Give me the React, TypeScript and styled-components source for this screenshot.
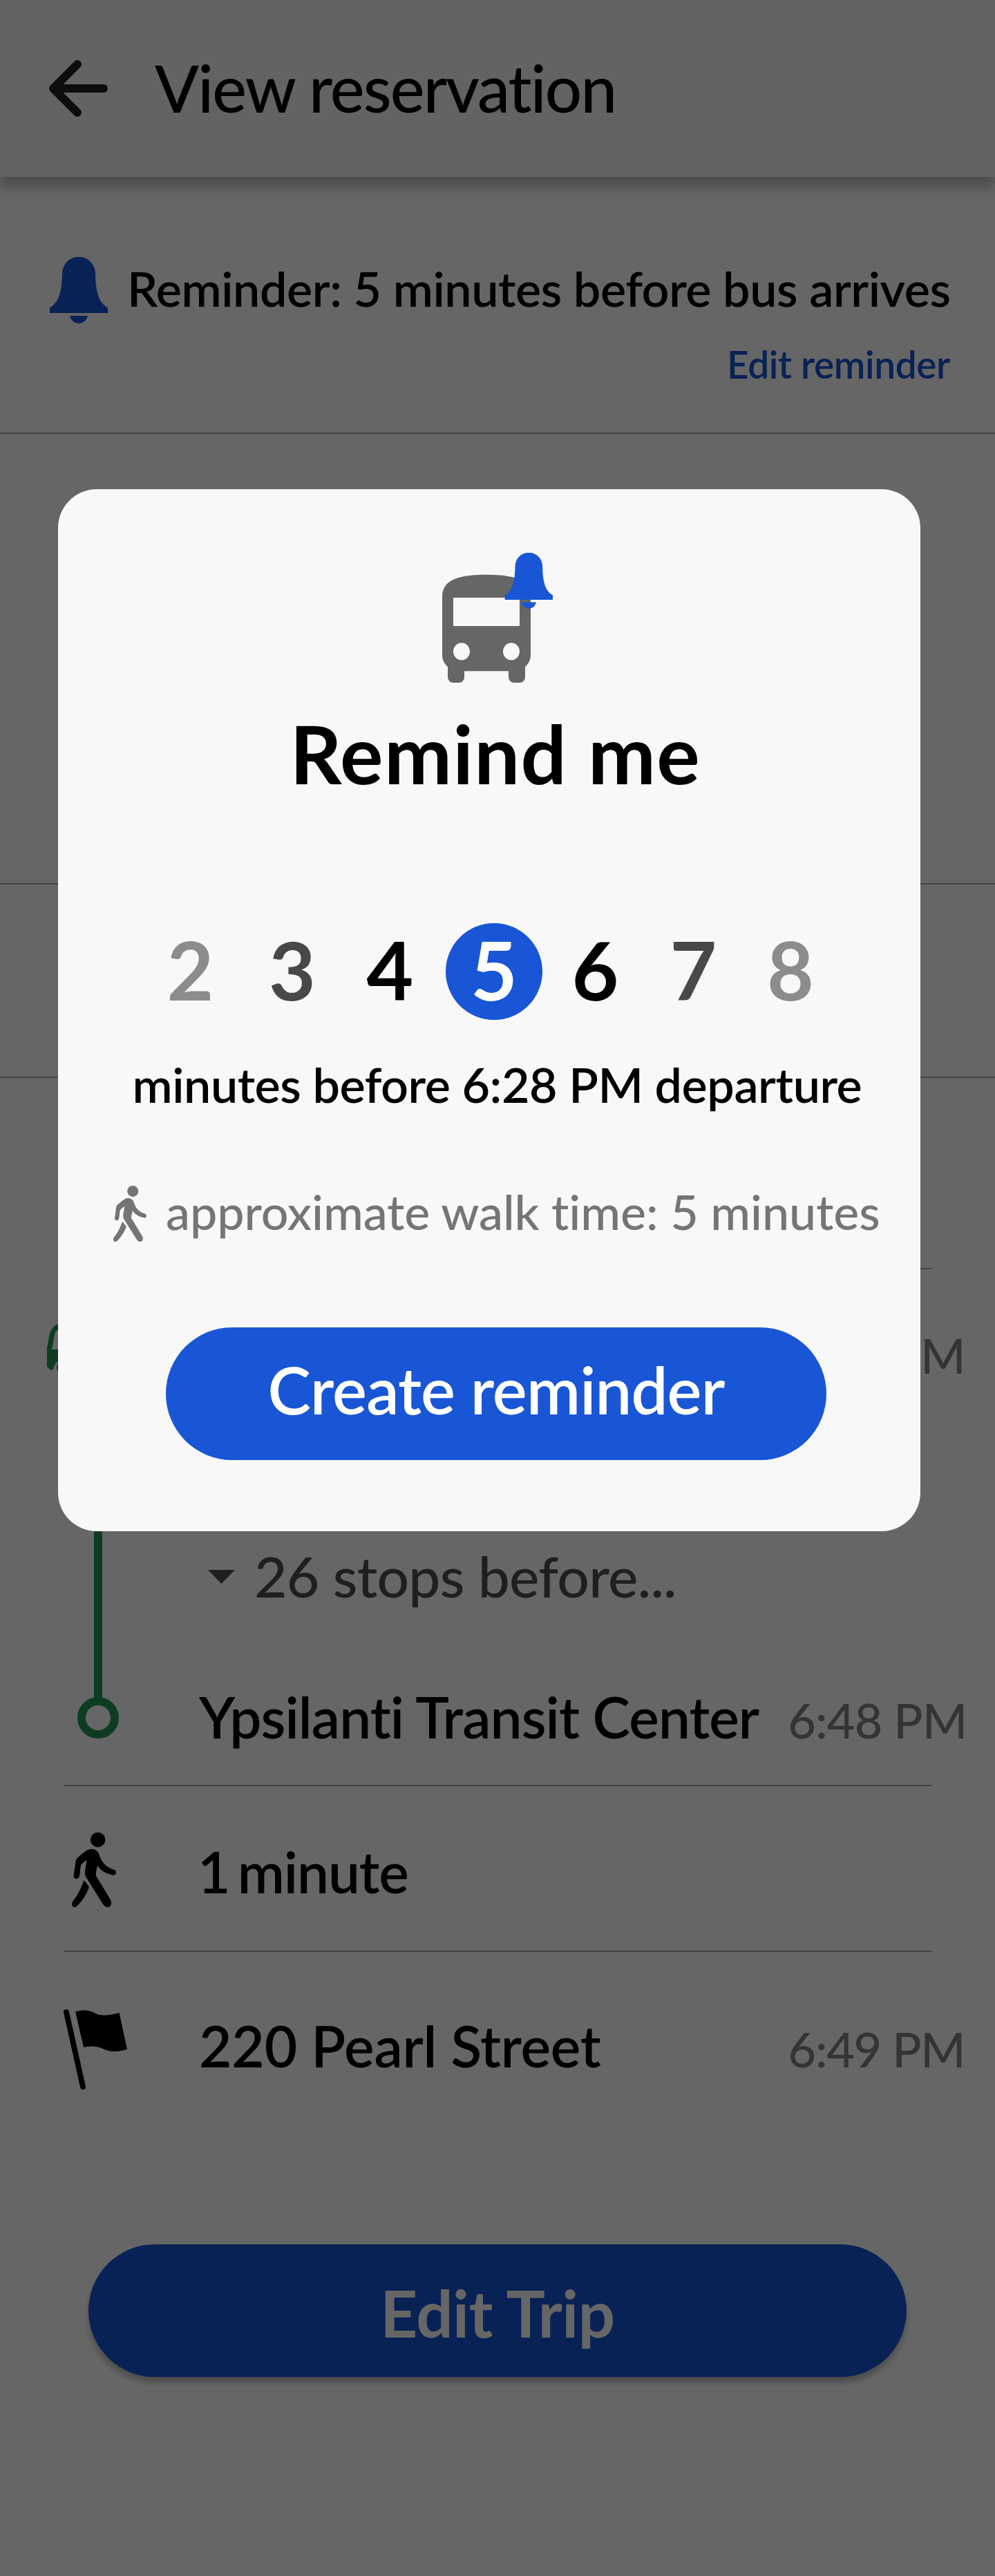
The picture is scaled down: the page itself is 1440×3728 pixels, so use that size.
import React from "react";
import styled, { createGlobalStyle } from "styled-components";

const BLUE = "#1856d6";
const GREEN = "#219653";
const GRAY_DARK = "#4f4f4f";
const GRAY = "#828282";

const GlobalStyle = createGlobalStyle`
  *, *::before, *::after { box-sizing: border-box; }
  body { margin: 0; background: #ffffff; }
  svg { display: block; flex: none; }
`;

const Screen = styled.main`
  position: relative;
  width: 1440px;
  height: 3728px;
  overflow: hidden;
  background: #ffffff;
  color: #000000;
  font-family: Lato, "Open Sans", sans-serif;
`;

interface TextProps {
  $size: number;
  $weight?: number;
  $track?: number;
  $word?: number;
  $color?: string;
}

const Text = styled.span<TextProps>`
  display: block;
  flex: none;
  white-space: nowrap;
  line-height: 1.2;
  font-size: ${(p) => p.$size}px;
  font-weight: ${(p) => p.$weight ?? 600};
  letter-spacing: ${(p) => p.$track ?? 0}px;
  word-spacing: ${(p) => p.$word ?? 0}px;
  color: ${(p) => p.$color ?? "inherit"};
`;

const AppBar = styled.header`
  position: relative;
  display: flex;
  align-items: flex-start;
  gap: 68px;
  height: 256px;
  padding: 71px 0 0 71px;
  background: #f8f8f8;
  box-shadow: 0 16px 16px rgba(0, 0, 0, 0.25);

  svg { margin-top: 16px; }
`;

const ReminderSection = styled.section`
  height: 372px;
  padding: 116px 65px 0 72px;
  border-bottom: 2px solid #aaaaaa;
`;

const ReminderLine = styled.div`
  display: flex;
  align-items: flex-start;
  gap: 28px;
  height: 96px;
`;

const ReminderText = styled.div`
  padding-top: 3px;
`;

const EditLink = styled.div`
  display: flex;
  justify-content: flex-end;
  padding-top: 26px;
`;

const Band = styled.section<{ $height: number }>`
  height: ${(p) => p.$height}px;
  border-bottom: 2px solid #aaaaaa;
`;

const Divider = styled.hr`
  height: 2px;
  margin: 0 92px;
  border: 0;
  background: #aaaaaa;
`;

const Spacer = styled.div<{ $height: number }>`
  height: ${(p) => p.$height}px;
`;

const Leg = styled.section`
  position: relative;
  height: 746px;
`;

const LegRow = styled.div<{ $top: number }>`
  display: flex;
  align-items: baseline;
  padding: ${(p) => p.$top}px 0 0 288px;
`;

const Departure = styled.div`
  display: flex;
  justify-content: space-between;
  align-items: flex-start;
  height: 165px;
  padding: 79px 44px 0 68px;
`;

const DepartureTime = styled.div`
  padding-top: 3px;
`;

const Track = styled.div`
  position: absolute;
  left: 136px;
  top: 146px;
  width: 12px;
  height: 478px;
  background: ${GREEN};
`;

const StopDot = styled.div`
  position: absolute;
  left: 112px;
  top: 619px;
  width: 60px;
  height: 60px;
  border: 12px solid ${GREEN};
  border-radius: 50%;
  background: #ffffff;
`;

const StopsToggle = styled.div`
  display: flex;
  align-items: flex-start;
  gap: 28px;
  height: 99px;
  margin-top: 229px;
  padding-left: 301px;

  svg { margin-top: 41px; }
`;

const Time = styled.div<{ $left: number }>`
  margin-left: ${(p) => p.$left}px;
`;

const Step = styled.section<{ $height: number; $icon: number }>`
  display: grid;
  grid-template-columns: ${(p) => p.$icon}px auto;
  align-items: start;
  height: ${(p) => p.$height}px;
`;

const StepIcon = styled.div<{ $top: number; $left: number }>`
  padding: ${(p) => p.$top}px 0 0 ${(p) => p.$left}px;
`;

const StepBody = styled.div<{ $top: number }>`
  display: flex;
  align-items: baseline;
  padding-top: ${(p) => p.$top}px;
`;

const PillButton = styled.button<{ $width: number }>`
  display: flex;
  align-items: center;
  justify-content: center;
  width: ${(p) => p.$width}px;
  height: 192px;
  padding: 0;
  border: 0;
  border-radius: 96px;
  background: ${BLUE};
  color: #ffffff;
  font-family: inherit;
`;

const EditTrip = styled(PillButton)`
  margin: 0 0 0 128px;
  padding-top: 7px;
  box-shadow: 0 8px 8px rgba(0, 0, 0, 0.25);
`;

const Scrim = styled.div`
  position: absolute;
  inset: 0;
  padding: 708px 0 0 84px;
  background: rgba(0, 0, 0, 0.6);
`;

const Dialog = styled.div`
  display: flex;
  flex-direction: column;
  align-items: flex-start;
  width: 1248px;
  height: 1508px;
  padding-top: 92px;
  border-radius: 56px;
  background: #f8f8f8;
`;

const DialogPart = styled.div<{ $top: number; $left: number }>`
  padding: ${(p) => p.$top}px 0 0 ${(p) => p.$left}px;
`;

const Minutes = styled.div`
  display: grid;
  grid-template-columns: 147px 148px 135px 166px 127px 157px 124px;
  justify-items: center;
  margin: 176px 0 0 118px;
`;

const Minute = styled.div<{ $color: string; $active: boolean }>`
  display: flex;
  align-items: center;
  justify-content: center;
  width: ${(p) => (p.$active ? "140px" : "auto")};
  height: 140px;
  padding-bottom: 7px;
  border-radius: 50%;
  background: ${(p) => (p.$active ? BLUE : "transparent")};
  color: ${(p) => p.$color};
`;

const WalkTime = styled.div`
  display: flex;
  align-items: flex-start;
  gap: 28px;
  margin: 100px 0 0 80px;
  color: #757575;

  svg { margin-top: 5px; }
`;

const CreateButton = styled(PillButton)`
  margin: 124px 0 0 156px;
  padding-bottom: 11px;
`;

const ArrowIcon = () => (
  <svg width="85" height="82" viewBox="0 0 85 82" fill="none" stroke="#222222" strokeWidth="12" strokeLinecap="round" strokeLinejoin="round">
    <path d="M41 6 6 41l35 35" />
    <path d="M8 41h71" />
  </svg>
);

const BELL = "M54 71A71 71 0 0 1 198 71C199 150 213 199 252 219V243H0V219C39 199 53 150 54 71ZM87 255H165C160 275 145 288 126 288S92 275 87 255Z";

const BellIcon = () => (
  <svg width="84" height="96" viewBox="0 0 252 288" fill={BLUE}>
    <path d={BELL} />
  </svg>
);

const BusBellIcon = () => (
  <svg width="160" height="188" viewBox="0 0 480 564">
    <g transform="translate(0 95)">
      <path
        fill="#666666"
        fillRule="evenodd"
        d="M0 96C0 20 75 0 192 0S384 20 384 96V350C384 370 375 387 360 400V445A24 24 0 0 1 336 469H312A24 24 0 0 1 288 445V419H96V445A24 24 0 0 1 72 469H48A24 24 0 0 1 24 445V400C9 387 0 370 0 350ZM48 100V223H336V100ZM48 333.500A36 37.500 0 1 0 120 333.500A36 37.500 0 1 0 48 333.500ZM264 333.500A36 37.500 0 1 0 336 333.500A36 37.500 0 1 0 264 333.500Z"
      />
    </g>
    <path transform="translate(272 0) scale(.825 .84)" fill={BLUE} d={BELL} />
  </svg>
);

const WalkIcon = ({ width, height }: { width: number; height: number }) => (
  <svg width={width} height={height} viewBox="0 0 192 324" fill="currentColor">
    <circle cx="113" cy="31.500" r="32" />
    <path d="M86 72C104 72 116 84 120 100C130 132 150 152 184 162C191 165 193 171 191 178C190 184 185 187 178 185C150 180 126 167 112 145C107 158 105 172 104 187L168 292C173 302 172 313 167 319C162 326 151 326 145 321C141 318 138 315 135 311L63 196C57 186 56 180 57 166L65 120C56 125 47 132 39 142C36 157 36 172 33 188C31 197 26 201 19 201C11 201 7 195 8 187L16 129C17 120 20 115 26 109C40 96 52 86 63 79C70 74 78 72 86 72Z" />
    <path d="M53 207L73 233C75 237 74 240 72 245C61 273 45 296 24 318C18 325 9 326 4 321C-1 316 -1 308 3 300C26 272 38 245 53 207Z" />
  </svg>
);

const FlagIcon = () => (
  <svg width="92" height="116" viewBox="0 0 276 348">
    <path d="M12 12 84 336" stroke="#000000" strokeWidth="24" strokeLinecap="round" />
    <path d="M51 10C78 2 108 0 130 13C154 31 192 27 242 15L276 173C240 185 200 187 170 170C142 157 116 159 87 164Z" />
  </svg>
);

const VehicleIcon = () => (
  <svg width="148" height="72" viewBox="0 0 148 72">
    <path
      fill={GREEN}
      fillRule="evenodd"
      d="M0 35C2 28 2 20 4 14C7 6 11 1 17 0H131C137 1 141 6 144 14L148 35V62L140 67H138C136 57 131 52 124 52S112 57 110 67H38C36 57 31 52 25 52C16 52 11 57 9 66C5 68 3 64 0 62ZM7 37H141L137 15C135 10 133 8 129 7H19C15 8 12 11 11 15Z"
    />
    <circle cx="25" cy="63" r="11" fill={GREEN} />
    <circle cx="124" cy="61" r="10" fill={GREEN} />
  </svg>
);

const CaretIcon = () => (
  <svg width="39" height="20" viewBox="0 0 39 20" fill={GRAY_DARK}>
    <path d="M0 0h39L19.500 20z" />
  </svg>
);

const minuteOptions = [
  { value: 2, color: "#8c8c8c" },
  { value: 3, color: "#484848" },
  { value: 4, color: "#000000" },
  { value: 5, color: "#ffffff", active: true },
  { value: 6, color: "#000000" },
  { value: 7, color: "#484848" },
  { value: 8, color: "#8c8c8c" },
];

function ReminderDialog() {
  return (
    <Dialog role="dialog" aria-label="Remind me">
      <DialogPart $top={0} $left={556}>
        <BusBellIcon />
      </DialogPart>
      <DialogPart $top={32} $left={335.5}>
        <Text $size={117} $weight={700} $track={1.3}>Remind me</Text>
      </DialogPart>
      <Minutes>
        {minuteOptions.map((m) => (
          <Minute key={m.value} $color={m.color} $active={!!m.active}>
            <Text $size={117} $weight={700}>{m.value}</Text>
          </Minute>
        ))}
      </Minutes>
      <DialogPart $top={51} $left={107.5}>
        <Text $size={70} $track={-0.45}>minutes before 6:28 PM departure</Text>
      </DialogPart>
      <WalkTime>
        <WalkIcon width={48} height={81} />
        <Text $size={70} $weight={500} $track={-0.09}>approximate walk time: 5 minutes</Text>
      </WalkTime>
      <CreateButton $width={956}>
        <Text $size={94} $track={-0.85}>Create reminder</Text>
      </CreateButton>
    </Dialog>
  );
}

export default function App() {
  return (
    <Screen>
      <GlobalStyle />
      <AppBar>
        <ArrowIcon />
        <Text $size={94} $weight={500} $track={-1.85}>View reservation</Text>
      </AppBar>

      <ReminderSection>
        <ReminderLine>
          <BellIcon />
          <ReminderText>
            <Text $size={70} $track={-0.42}>Reminder: 5 minutes before bus arrives</Text>
          </ReminderText>
        </ReminderLine>
        <EditLink>
          <Text $size={55} $track={-0.4} $color={BLUE}>Edit reminder</Text>
        </EditLink>
      </ReminderSection>
      <Band $height={652} />
      <Band $height={280} />
      <Spacer $height={275} />
      <Divider />

      <Leg>
        <Track />
        <StopDot />
        <Departure>
          <VehicleIcon />
          <DepartureTime>
            <Text $size={70} $weight={500} $track={-1.5} $color={GRAY}>6:28 PM</Text>
          </DepartureTime>
        </Departure>
        <StopsToggle>
          <CaretIcon />
          <Text $size={82} $weight={500} $track={-0.7} $color={GRAY_DARK}>26 stops before...</Text>
        </StopsToggle>
        <LegRow $top={105}>
          <Text $size={82} $track={-0.9}>Ypsilanti Transit Center</Text>
          <Time $left={42}>
            <Text $size={70} $weight={500} $track={-0.8} $color={GRAY}>6:48 PM</Text>
          </Time>
        </LegRow>
      </Leg>
      <Divider />

      <Step $height={238} $icon={286}>
        <StepIcon $top={67} $left={104}>
          <WalkIcon width={64} height={108} />
        </StepIcon>
        <StepBody $top={74}>
          <Text $size={82} $track={-1.1} $word={-8}>1 minute</Text>
        </StepBody>
      </Step>
      <Divider />

      <Step $height={423} $icon={288}>
        <StepIcon $top={83} $left={92}>
          <FlagIcon />
        </StepIcon>
        <StepBody $top={86}>
          <Text $size={82} $track={-0.2}>220 Pearl Street</Text>
          <Time $left={271}>
            <Text $size={70} $weight={500} $track={-1.3} $color={GRAY}>6:49 PM</Text>
          </Time>
        </StepBody>
      </Step>

      <EditTrip $width={1184}>
        <Text $size={94} $weight={700} $track={-0.5}>Edit Trip</Text>
      </EditTrip>

      <Scrim>
        <ReminderDialog />
      </Scrim>
    </Screen>
  );
}
